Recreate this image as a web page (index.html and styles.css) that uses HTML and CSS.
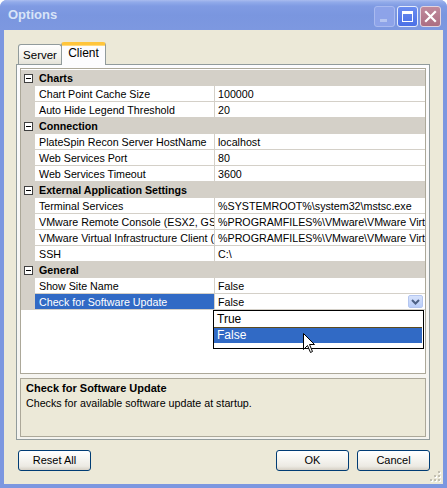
FILE: index.html
```html
<!DOCTYPE html>
<html>
<head>
<meta charset="utf-8">
<link rel="stylesheet" href="styles.css">
</head>
<body>
<div class="window">
  <div class="titlebar">
    <span class="title">Options</span>
    <div class="caption-buttons">
      <span class="cb cb-min"><svg width="21" height="21" viewBox="0 0 21 21"><rect x="6" y="13" width="7" height="3" fill="#B4C4F0"/></svg></span>
      <span class="cb cb-max"><svg width="21" height="21" viewBox="0 0 21 21"><rect x="5.5" y="5.5" width="10" height="10" fill="none" stroke="#fff" stroke-width="1"/><rect x="5" y="5" width="11" height="3" fill="#fff"/></svg></span>
      <span class="cb cb-close"><svg width="21" height="21" viewBox="0 0 21 21"><path d="M6 6 L15 15 M15 6 L6 15" stroke="#fff" stroke-width="2.2" stroke-linecap="square"/></svg></span>
    </div>
  </div>
  <div class="client">
    <div class="tabs">
      <div class="tab">Server</div>
      <div class="tab active">Client</div>
    </div>
    <div class="panel">
      <div class="pgrid">
        <div class="row cat"><span class="mg"><span class="box"></span></span><span class="cname">Charts</span></div>
        <div class="row"><span class="mg"></span><span class="name">Chart Point Cache Size</span><span class="val">100000</span></div>
        <div class="row"><span class="mg"></span><span class="name">Auto Hide Legend Threshold</span><span class="val">20</span></div>
        <div class="row cat"><span class="mg"><span class="box"></span></span><span class="cname">Connection</span></div>
        <div class="row"><span class="mg"></span><span class="name">PlateSpin Recon Server HostName</span><span class="val">localhost</span></div>
        <div class="row"><span class="mg"></span><span class="name">Web Services Port</span><span class="val">80</span></div>
        <div class="row"><span class="mg"></span><span class="name">Web Services Timeout</span><span class="val">3600</span></div>
        <div class="row cat"><span class="mg"><span class="box"></span></span><span class="cname">External Application Settings</span></div>
        <div class="row"><span class="mg"></span><span class="name">Terminal Services</span><span class="val">%SYSTEMROOT%\system32\mstsc.exe</span></div>
        <div class="row"><span class="mg"></span><span class="name">VMware Remote Console (ESX2, GSX)</span><span class="val">%PROGRAMFILES%\VMware\VMware Virtual</span></div>
        <div class="row"><span class="mg"></span><span class="name">VMware Virtual Infrastructure Client (ESX3)</span><span class="val">%PROGRAMFILES%\VMware\VMware Virtual</span></div>
        <div class="row"><span class="mg"></span><span class="name">SSH</span><span class="val">C:\</span></div>
        <div class="row cat"><span class="mg"><span class="box"></span></span><span class="cname">General</span></div>
        <div class="row"><span class="mg"></span><span class="name">Show Site Name</span><span class="val">False</span></div>
        <div class="row"><span class="mg"></span><span class="name selected">Check for Software Update</span><span class="val editing">False<span class="ddbtn"><svg width="13" height="12" viewBox="0 0 13 12"><path d="M3 4 L6.5 7.5 L10 4" fill="none" stroke="#4D6185" stroke-width="2"/></svg></span></span></div>
        <div class="droplist">
          <div class="item">True</div>
          <div class="item hl">False</div>
        </div>
        <svg class="cursor" width="13" height="21" viewBox="0 0 13 21"><path d="M0.5 0.5 L0.5 16.5 L4.5 12.5 L7.5 19.5 L9.5 18.5 L6.5 11.5 L11.5 11.5 Z" fill="#fff" stroke="#000" stroke-width="1"/></svg>
      </div>
      <div class="desc">
        <div class="dtitle">Check for Software Update</div>
        <div class="dtext">Checks for available software update at startup.</div>
      </div>
    </div>
    <div class="buttons">
      <span class="btn">Reset All</span>
      <span class="spacer"></span>
      <span class="btn">OK</span>
      <span class="btn">Cancel</span>
    </div>
    <svg class="grip" width="12" height="12" viewBox="0 0 12 12">
      <g fill="#fff"><rect x="10" y="2" width="2" height="2"/><rect x="10" y="6" width="2" height="2"/><rect x="6" y="6" width="2" height="2"/><rect x="10" y="10" width="2" height="2"/><rect x="6" y="10" width="2" height="2"/><rect x="2" y="10" width="2" height="2"/></g>
      <g fill="#C2BFB1"><rect x="9" y="1" width="2" height="2"/><rect x="9" y="5" width="2" height="2"/><rect x="5" y="5" width="2" height="2"/><rect x="9" y="9" width="2" height="2"/><rect x="5" y="9" width="2" height="2"/><rect x="1" y="9" width="2" height="2"/></g>
    </svg>
  </div>
</div>
</body>
</html>
```

FILE: styles.css
```css
html, body {
  margin: 0;
  padding: 0;
  background: #ffffff;
}
body {
  font-family: "Liberation Sans", Arial, sans-serif;
  font-size: 10.7px;
  color: #000;
}
.window {
  width: 447px;
  height: 488px;
  display: flex;
  flex-direction: column;
  background: #7C97E0;
  border-radius: 7px 7px 0 0;
  overflow: hidden;
}
.titlebar {
  height: 30px;
  flex: none;
  box-sizing: border-box;
  display: flex;
  align-items: center;
  padding: 0 6px 0 8px;
  background: linear-gradient(#A9BCEF 0, #92ABEA 2px, #809BE3 6px, #7A96DF 50%, #7D98E0 100%);
}
.title {
  flex: 1;
  color: #D8E4F8;
  font-weight: bold;
  font-size: 13px;
  padding-bottom: 1px;
}
.caption-buttons {
  display: flex;
  gap: 2px;
  margin-top: 3px;
}
.cb {
  width: 21px;
  height: 21px;
  box-sizing: border-box;
  border-radius: 3px;
  display: block;
  position: relative;
}
.cb svg {
  position: absolute;
  left: -1px;
  top: -1px;
}
.cb-min {
  background: #8DA3E9;
  border: 1px solid #A9BAF0;
}
.cb-max {
  background: linear-gradient(#6A8CF0, #4B70E6);
  border: 1px solid #E6ECFB;
}
.cb-close {
  background: linear-gradient(#C08A9C, #AC6E82);
  border: 1px solid #E2D4DE;
}
.client {
  flex: 1;
  margin: 0 4px 4px 4px;
  background: #ECE9D8;
  padding: 12px 13px 0 12px;
  position: relative;
  display: flex;
  flex-direction: column;
}
.tabs {
  display: flex;
  align-items: flex-end;
  height: 22px;
  padding-left: 2px;
  position: relative;
  z-index: 2;
}
.tab {
  width: 44px;
  height: 20px;
  box-sizing: border-box;
  border: 1px solid #919B9C;
  border-bottom: none;
  border-radius: 3px 3px 0 0;
  background: linear-gradient(#FFFFFF, #F3F2EC 60%, #E4E2D8);
  text-align: center;
  line-height: 20px;
  font-size: 11.5px;
}
.tab.active {
  width: 45px;
  height: 23px;
  margin-bottom: -1px;
  margin-left: -1px;
  border-top: 3px solid #FFC53C;
  border-radius: 3px 3px 0 0;
  background: #FCFCFE;
  line-height: 17px;
  font-size: 12px;
  box-shadow: inset 0 1px 0 #FFD97A;
}
.panel {
  width: 414px;
  height: 376px;
  box-sizing: border-box;
  border: 1px solid #919B9C;
  background: linear-gradient(#FCFCFE, #F4F3EE);
  padding: 3px 3px 2px 3px;
  display: flex;
  flex-direction: column;
  gap: 4px;
}
.pgrid {
  height: 306px;
  flex: none;
  box-sizing: border-box;
  border: 1px solid #ACA899;
  background: #fff;
  position: relative;
  padding-top: 1px;
}
.row {
  display: grid;
  grid-template-columns: 14px 180px 1fr;
  height: 16px;
}
.row > span {
  box-sizing: border-box;
  height: 16px;
  line-height: 16px;
  white-space: nowrap;
  overflow: hidden;
}
.mg {
  background: #D4D0C8;
  display: flex;
  align-items: center;
  justify-content: center;
}
.name {
  border-right: 1px solid #D4D0C8;
  border-bottom: 1px solid #D4D0C8;
  padding-left: 4px;
}
.name.selected {
  background: #316AC5;
  color: #fff;
}
.val {
  border-bottom: 1px solid #D4D0C8;
  padding-left: 3px;
}
.val.editing {
  position: relative;
}
.cat {
  background: #D4D0C8;
}
.cname {
  grid-column: 2 / 4;
  font-weight: bold;
  padding-left: 4px;
}
.box {
  width: 9px;
  height: 9px;
  box-sizing: border-box;
  border: 1px solid #404040;
  background: #fff;
  position: relative;
  margin-left: 1px;
}
.box::after {
  content: "";
  position: absolute;
  left: 1px;
  top: 3px;
  width: 5px;
  height: 1px;
  background: #000;
}
.ddbtn {
  position: absolute;
  right: 2px;
  top: 1px;
  width: 15px;
  height: 13px;
  box-sizing: border-box;
  background: linear-gradient(#D6E2FC, #B9CDF8);
  border: 1px solid #B4C6F0;
  border-radius: 2px;
  display: flex;
  align-items: center;
  justify-content: center;
}
.droplist {
  position: absolute;
  left: 192px;
  top: 241px;
  width: 211px;
  height: 39px;
  box-sizing: border-box;
  border: 1px solid #000;
  background: #fff;
  z-index: 3;
}
.item {
  height: 16px;
  line-height: 16px;
  padding-left: 3px;
  font-size: 12px;
}
.item.hl {
  height: 16px;
  box-sizing: border-box;
  background: #316AC5;
  color: #fff;
  border-top: 1px solid #5C4A1E;
  line-height: 14px;
  margin-right: 1px;
}
.cursor {
  position: absolute;
  left: 282px;
  top: 264px;
  z-index: 4;
}
.desc {
  flex: 1;
  box-sizing: border-box;
  border: 1px solid #ACA899;
  background: #ECE9D8;
  padding: 2px 5px;
}
.dtitle {
  font-weight: bold;
  line-height: 15px;
  font-size: 11px;
}
.dtext {
  line-height: 15px;
}
.buttons {
  display: flex;
  gap: 8px;
  margin-top: 10px;
  padding-left: 2px;
  width: 414px;
  box-sizing: border-box;
}
.spacer {
  flex: 1;
}
.btn {
  width: 73px;
  height: 21px;
  box-sizing: border-box;
  border: 1px solid #003C74;
  border-radius: 3px;
  background: linear-gradient(#FFFFFF, #F4F3EE 50%, #ECEAE3 80%, #D6D0C5);
  text-align: center;
  line-height: 19px;
  font-size: 11px;
}
.grip {
  position: absolute;
  right: 2px;
  bottom: 2px;
}
```
